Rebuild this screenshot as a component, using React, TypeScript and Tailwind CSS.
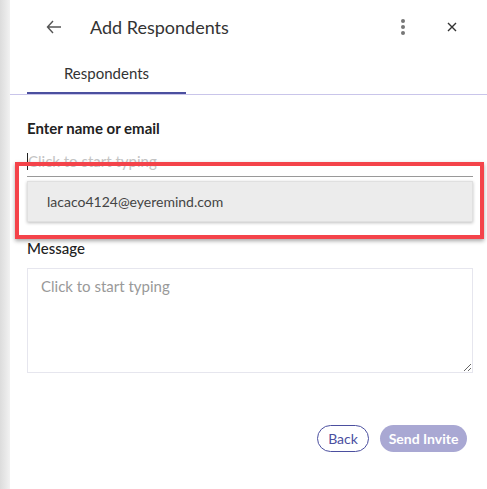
import { FC } from "react"

const App: FC = () => {
  return (
    <div className="w-[487px] h-[489px] flex bg-white overflow-hidden" style={{ fontFamily: "Lato, 'Noto Sans', sans-serif" }}>
      {/* left edge */}
      <div className="w-[10px] h-full bg-gradient-to-r from-[#dcdcdc] to-[#f2f2f2]" />

      <div className="flex-1 h-full relative flex flex-col">
        {/* Header */}
        <div className="h-[54px] flex items-center pl-[36px] pr-[30px]">
          <svg width="16" height="14" viewBox="0 0 16 14" className="text-[#555]">
            <path d="M7 1 L1.5 7 L7 13 M1.5 7 H15" fill="none" stroke="currentColor" strokeWidth="1.4" />
          </svg>
          <p className="ml-[28px] text-[18px] text-[#333]">Add Respondents</p>
          <div className="ml-auto flex flex-col gap-[2px] mr-[42px]">
            <span className="w-[4px] h-[4px] rounded-full bg-[#777]" />
            <span className="w-[4px] h-[4px] rounded-full bg-[#777]" />
            <span className="w-[4px] h-[4px] rounded-full bg-[#777]" />
          </div>
          <svg width="10" height="10" viewBox="0 0 10 10" className="text-[#333]">
            <path d="M1 1 L9 9 M9 1 L1 9" fill="none" stroke="currentColor" strokeWidth="1.4" />
          </svg>
        </div>

        {/* Tabs */}
        <div className="border-b border-[#c9c5ea] pl-[17px]">
          <div className="w-[159px] h-[40px] flex items-center justify-center border-b-2 border-[#4b4f9f] text-[15px] text-[#333]">
            Respondents
          </div>
        </div>

        {/* Form */}
        <div className="pl-[17px] pr-[14px] pt-[24px] flex flex-col">
          <p className="text-[15px] font-bold text-[#222] leading-[18px]">Enter name or email</p>

          <div className="mt-[14px] h-[26px] flex items-center pb-[5px] border-b border-[#999]">
            <span className="w-px h-[17px] bg-[#222]" />
            <span className="text-[15px] text-[#c4c4c4]">Click to start typing</span>
          </div>

          <div className="mt-[4px] h-[41px] flex items-center pl-[19px] bg-[#ececec] border border-[#e0e0e0] shadow-[0_1px_3px_rgba(0,0,0,0.25)] text-[14px] text-[#444]">
            lacaco4124@eyeremind.com
          </div>

          <p className="mt-[17px] text-[15px] font-medium text-[#222] leading-[18px]">Message</p>

          <textarea
            placeholder="Click to start typing"
            className="mt-[11px] h-[105px] border border-[#e6e6ee] px-[13px] pt-[6px] pb-[8px] text-[15px] text-[#333] placeholder:text-[#999] outline-none resize-y"
          />

          <div className="mt-[52px] flex justify-end gap-[11px] pr-[6px]">
            <button className="h-[27px] w-[52px] rounded-full border border-[#4b4f9f] text-[14px] text-[#4b4f9f]">Back</button>
            <button className="h-[27px] w-[87px] rounded-full bg-[#a9a8d3] text-[14px] font-bold text-white">Send Invite</button>
          </div>
        </div>

        {/* highlight annotation */}
        <div className="absolute left-[5px] top-[162px] w-[469px] h-[77px] border-[4px] border-[#f4434a] shadow-[0_2px_4px_rgba(0,0,0,0.35)] pointer-events-none" />
      </div>
    </div>
  )
}

export default App
